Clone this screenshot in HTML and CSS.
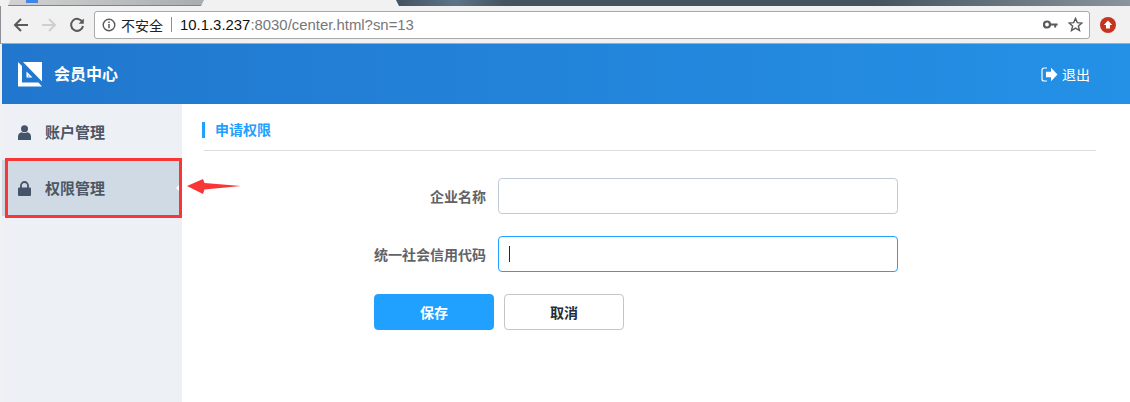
FILE: index.html
```html
<!DOCTYPE html>
<html lang="zh">
  <head>
    <meta charset="utf-8" />
    <title>会员中心</title>
    <link rel="stylesheet" href="styles.css">
  </head>

  <body>
    <div class="window-top">
      <div class="tab"><span class="tab-favicon"></span></div>
      <div class="desktop-strip"></div>
    </div>

    <div class="toolbar">
      <svg class="nav-icon" width="16" height="16" viewBox="0 0 16 16" fill="none" stroke="#5a5a5a" stroke-width="2">
        <path d="M15 8H2M8 2 2 8l6 6"></path>
      </svg>
      <svg class="nav-icon" width="16" height="16" viewBox="0 0 16 16" fill="none" stroke="#cfcfcf" stroke-width="2">
        <path d="M1 8h13M8 2l6 6-6 6"></path>
      </svg>
      <svg class="nav-icon" width="16" height="16" viewBox="0 0 16 16" fill="none" stroke="#5a5a5a" stroke-width="2">
        <path d="M13.4 5A6 6 0 1 0 14 9"></path>
        <path d="M14.8 1.5v5.2H9.6z" fill="#5a5a5a" stroke="none"></path>
      </svg>
      <div class="omnibox">
        <svg width="14" height="14" viewBox="0 0 14 14" fill="none" stroke="#5a5a5a">
          <circle cx="7" cy="7" r="5.8" stroke-width="1.4"></circle>
          <path d="M7 6v4.2M7 3.6v1.4" stroke-width="1.5"></path>
        </svg>
        <span class="secure-label">不安全</span>
        <span class="omnibox-sep"></span>
        <span class="url"><b>10.1.3.237</b>:8030/center.html?sn=13</span>
        <svg class="key-icon" width="15" height="9" viewBox="0 0 15 9">
          <circle cx="4" cy="4.5" r="3" fill="none" stroke="#5a5a5a" stroke-width="2.2"></circle>
          <path d="M6 3.4h8.6v2.2h-1.4v2h-2v-2H6z" fill="#5a5a5a"></path>
        </svg>
        <svg class="star-icon" width="15" height="15" viewBox="0 0 15 15" fill="none" stroke="#5a5a5a" stroke-width="1.4">
          <path d="M7.5 1.4 9.3 5.6l4.6.4-3.5 3 1.1 4.5-4-2.4-4 2.4 1.1-4.5-3.5-3 4.6-.4z"></path>
        </svg>
      </div>
      <svg class="ext-icon" width="16" height="16" viewBox="0 0 16 16">
        <circle cx="8" cy="8" r="8" fill="#c5341f"></circle>
        <path d="M8 3.4 12.2 8H10v3.6H6V8H3.8z" fill="#fff"></path>
      </svg>
    </div>

    <div class="app">
      <header class="app-header">
        <div class="brand">
          <svg width="24" height="25" viewBox="0 0 24 25">
            <path d="M0 0 4 4V20.500H20.500L24 24.500H0z" fill="#fff"></path>
            <path d="M5 0H24V19.500z" fill="#fff"></path>
            <path d="M8.500 9.500V15.500H14.500z" fill="#fff"></path>
            <path d="M10 13V14.500H11.500z" fill="#2178cf"></path>
          </svg>
          <span>会员中心</span>
        </div>
        <div class="logout">
          <svg width="17" height="15" viewBox="0 0 17 15">
            <path d="M6 1H3a2 2 0 0 0-2 2v9a2 2 0 0 0 2 2h3" fill="none" stroke="#fff" stroke-width="1.2"></path>
            <path d="M5 4.800h5V.8l6.500 6.700L10 14.200v-4H5z" fill="#fff"></path>
          </svg>
          <span>退出</span>
        </div>
      </header>

      <div class="app-body">
        <aside class="sidebar">
          <div class="side-item">
            <svg width="13" height="15" viewBox="0 0 13 15" fill="#45536b">
              <circle cx="6.500" cy="3.800" r="3.500"></circle>
              <path d="M0 15v-3.500C0 8.800 2 7.600 3.500 7.300c1.800 1 4.200 1 6 0C11 7.600 13 8.800 13 11.500V15z"></path>
            </svg>
            <span>账户管理</span>
          </div>
          <div class="side-item side-item-active">
            <svg width="13" height="15" viewBox="0 0 13 15">
              <path d="M3 7V4.500a3.500 3.500 0 0 1 7 0V7" fill="none" stroke="#45536b" stroke-width="1.800"></path>
              <rect y="6.500" width="13" height="8.500" rx="1" fill="#45536b"></rect>
            </svg>
            <span>权限管理</span>
          </div>
        </aside>

        <main class="content">
          <h3 class="section-title">申请权限</h3>
          <form class="apply-form">
            <div class="form-row">
              <label class="form-label">企业名称</label>
              <div class="form-input"></div>
            </div>
            <div class="form-row">
              <label class="form-label">统一社会信用代码</label>
              <div class="form-input form-input-focus"><span class="caret"></span></div>
            </div>
            <div class="form-actions">
              <button type="button" class="btn btn-primary">保存</button>
              <button type="button" class="btn">取消</button>
            </div>
          </form>
        </main>
      </div>
    </div>

    <!-- annotation drawn over the screenshot -->
    <div class="mark-box"></div>
    <svg class="mark-arrow" width="56" height="20" viewBox="0 0 56 20">
      <path d="M0 10 16 3l1.500 4L54 10l-36.500 3.500L16 18z" fill="#f83636"></path>
    </svg>
  </body>
</html>
```

FILE: styles.css
```css
html,
body {
  margin: 0;
  padding: 0;
  height: 402px;
  overflow: hidden;
  background: #f1f1f1;
  font-family: "Liberation Sans", "Noto Sans CJK SC", sans-serif;
  position: relative;
}

* {
  box-sizing: border-box;
}

.window-top {
  height: 6px;
  display: flex;
  justify-content: space-between;
  background: #f1f1f1;
  overflow: hidden;
}

.tab {
  width: 196px;
  height: 6px;
  margin-left: 8px;
  background: linear-gradient(to right, #d2d2d2, #a9adb0);
  border-bottom: 1px solid #808488;
  clip-path: polygon(2px 0, 100% 0, calc(100% - 3px) 100%, 0 100%);
}

.tab-favicon {
  display: block;
  width: 12px;
  height: 3px;
  margin-left: 18px;
  background: #3f86e8;
}

.desktop-strip {
  width: 734px;
  height: 6px;
  background: linear-gradient(to right, #43535f 0%, #5d7488 8%, #43535f 15%, #43535f 65%, #8a949c 100%);
  clip-path: polygon(0 0, 100% 0, 100% 100%, 3px 100%);
}

.toolbar {
  height: 38px;
  display: flex;
  align-items: center;
  padding: 0 0 0 12px;
  background: #f1f1f1;
  border-bottom: 1px solid #a8a8a8;
  border-left: 1px solid #8d9094;
}

.nav-icon {
  margin-right: 12px;
  flex: none;
}

.omnibox {
  width: 996px;
  height: 28px;
  margin-left: -3px;
  display: flex;
  align-items: center;
  padding: 0 6px 0 7px;
  background: #fff;
  border: 1px solid #a9a9a9;
  border-radius: 3px;
  font-size: 14px;
}

.secure-label {
  margin-left: 5px;
  font-size: 14px;
  color: #222;
}

.omnibox-sep {
  width: 1px;
  height: 15px;
  margin: 0 8px;
  background: #8f8f8f;
}

.url {
  color: #777;
  flex: 1;
  font-size: 14.9px;
}

.url b {
  font-weight: 400;
  color: #111;
}

.key-icon {
  margin-right: 10px;
}

.ext-icon {
  margin-left: 10px;
  flex: none;
}

.app {
  margin-left: 2px;
  height: 358px;
  background: #fff;
}

.app-header {
  height: 60px;
  display: flex;
  align-items: center;
  justify-content: space-between;
  padding: 0 40px 0 16px;
  color: #fff;
  background: linear-gradient(to right, #2177cd, #2491e6);
}

.brand {
  display: flex;
  align-items: center;
  gap: 12px;
  font-size: 16px;
  font-weight: 700;
}

.brand span {
  margin-top: -2px;
}

.logout {
  display: flex;
  align-items: center;
  gap: 4px;
  font-size: 14px;
}

.app-body {
  display: flex;
  height: 298px;
}

.sidebar {
  width: 180px;
  flex: none;
  background: #edf0f5;
}

.side-item {
  height: 56px;
  display: flex;
  align-items: center;
  gap: 14px;
  padding-left: 16px;
  font-size: 15px;
  font-weight: 700;
  color: #4c5664;
}

.side-item span {
  margin-top: -2px;
}

.side-item-active {
  background: #d0dae4;
  position: relative;
}

.side-item-active::after {
  content: "";
  position: absolute;
  right: 0;
  top: 22px;
  border: 6px solid transparent;
  border-right-color: #fff;
  border-left-width: 0;
}

.content {
  flex: 1;
  padding: 0 34px 0 20px;
}

.section-title {
  margin: 18px 0 0;
  height: 16px;
  line-height: 16px;
  font-size: 14px;
  font-weight: 700;
  color: #20a0ff;
  border-left: 3px solid #20a0ff;
  padding-left: 10px;
}

.apply-form {
  margin-top: 12px;
  padding-top: 27px;
  margin-left: 2px;
  border-top: 1px solid #dcdcdc;
}

.form-row {
  display: flex;
  align-items: center;
  height: 36px;
  margin-bottom: 22px;
}

.form-label {
  width: 294px;
  flex: none;
  padding-right: 12px;
  text-align: right;
  font-size: 14px;
  font-weight: 700;
  color: #5f6368;
}

.form-input {
  width: 400px;
  height: 36px;
  display: flex;
  align-items: center;
  padding-left: 10px;
  border: 1px solid #bfcbd9;
  border-radius: 4px;
  background: #fff;
}

.form-input-focus {
  border-color: #20a0ff;
}

.caret {
  width: 1px;
  height: 16px;
  background: #1f2d3d;
}

.form-actions {
  display: flex;
  gap: 10px;
  margin-left: 170px;
}

.btn {
  width: 120px;
  height: 36px;
  padding: 0;
  font-family: inherit;
  font-size: 14px;
  font-weight: 700;
  color: #1f2d3d;
  background: #fff;
  border: 1px solid #c4c4c4;
  border-radius: 4px;
}

.btn-primary {
  color: #fff;
  background: #20a0ff;
  border-color: #20a0ff;
}

.mark-box {
  position: absolute;
  left: 5px;
  top: 158px;
  width: 177px;
  height: 60px;
  border: 3px solid #f83636;
}

.mark-arrow {
  position: absolute;
  left: 187px;
  top: 176px;
}
```
